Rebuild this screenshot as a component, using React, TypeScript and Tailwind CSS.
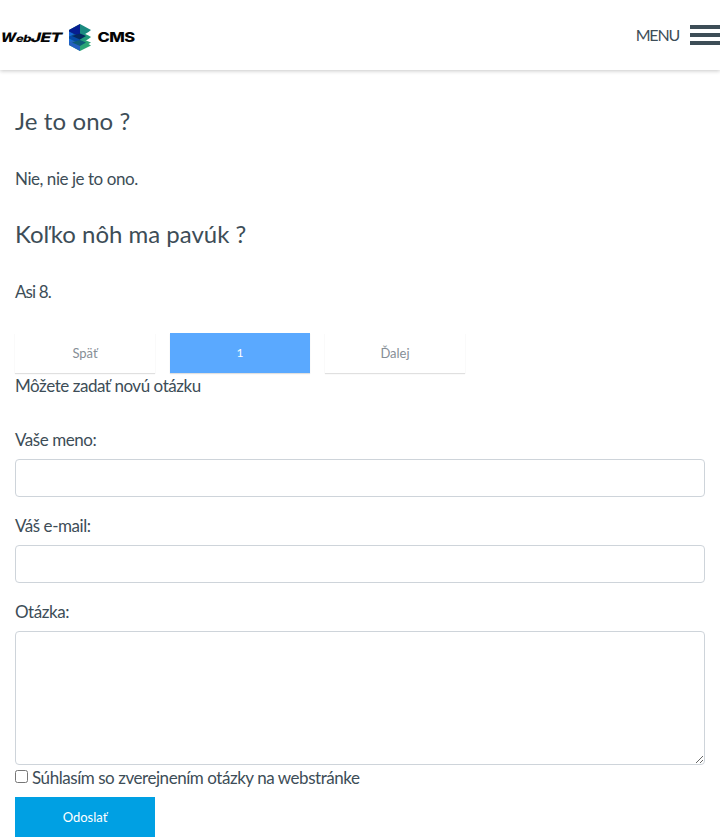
import React from "react";

function Logo() {
  return (
    <svg width="136" height="30" viewBox="0 0 136 30" className="block" fontFamily="Inter, 'Liberation Sans', sans-serif" fontWeight="800" fill="#050505">
      <g transform="skewX(-14)">
        <text x="4.500" y="19" fontSize="13" textLength="15" lengthAdjust="spacingAndGlyphs">W</text>
        <text x="20" y="19" fontSize="10" textLength="15" lengthAdjust="spacingAndGlyphs">eb</text>
        <text x="34.500" y="19" fontSize="13" textLength="31" lengthAdjust="spacingAndGlyphs">JET</text>
      </g>
      <g transform="translate(0 1)">
        <path d="M69 7 80 1v24l-11-5z" fill="#1765dd" />
        <path d="M80 14 91 18.500 88.500 20 91 21.500 80 27 69 21v-3z" fill="#2ba575" />
        <path d="M80 14v13l-11-6v-3z" fill="#2460c0" />
        <path d="M80 7.500 88.500 11.500 91 13 88.500 15 80 20 69 14.500v-2z" fill="#239b7b" />
        <path d="M80 7.500V20l-11-5.500v-2z" fill="#064aa5" />
        <path d="M80 0 91 6 88.500 8 80 13 69 7.500V6z" fill="#1b8a80" />
        <path d="M80 0v13l-11-5.500V6z" fill="#061e91" />
        <path d="m80 9.500 6 2.500-6 3.500-8-3.500z" fill="#06295f" />
        <path d="m80 16 6 2.500-6 3.500-8-3.500z" fill="#0d5c78" />
      </g>
      <text x="97.500" y="19" fontSize="13" textLength="37" lengthAdjust="spacingAndGlyphs">CMS</text>
    </svg>
  );
}

function Field({ label, area = false }: { label: string; area?: boolean }) {
  return (
    <label className="block">
      <span className="mb-2 block h-6">{label}</span>
      {area ? (
        <textarea className="block h-[134px] w-full resize rounded-[4px] border border-[#ced4da] bg-white outline-none" />
      ) : (
        <input className="mb-4 block h-[38px] w-full rounded-[4px] border border-[#ced4da] bg-white outline-none" />
      )}
    </label>
  );
}

export default function App() {
  return (
    <div className="h-[837px] w-full overflow-hidden bg-white font-['Lato','Noto_Sans',sans-serif] text-[17px] leading-[26px] tracking-[-0.45px] text-[#3d4d57]">
      <header className="flex h-[70px] items-center justify-between shadow-[0_1px_4px_rgba(0,0,0,0.22)]">
        <div className="pt-[6px]"><Logo /></div>
        <button className="flex items-center gap-[11px]">
          <span className="text-[16px] leading-6 tracking-[-1.2px]">MENU</span>
          <span className="flex flex-col gap-1">
            <span className="h-1 w-[30px] bg-[#3d4d57]" />
            <span className="h-1 w-[30px] bg-[#3d4d57]" />
            <span className="h-1 w-[30px] bg-[#3d4d57]" />
          </span>
        </button>
      </header>
      <main className="px-[15px] pt-[33px]">
        <h2 className="h-9 text-[24px] leading-9 tracking-[0.1px]">Je to ono ?</h2>
        <p className="mt-[27px] h-6">Nie, nie je to ono.</p>
        <h2 className="mt-[26px] h-9 text-[24px] leading-9 tracking-normal">Koľko nôh ma pavúk ?</h2>
        <p className="mt-[27px] h-6 tracking-[-0.9px]">Asi 8.</p>
        <nav className="mt-[30px] flex gap-[15px] text-[13px] leading-6 tracking-normal text-[#868e96]">
          <button className="h-10 w-[140px] bg-white shadow-[0_1px_1px_rgba(0,0,0,0.12)]">Späť</button>
          <button className="h-10 w-[140px] bg-[#5aa9ff] text-[12px] text-white shadow-[0_1px_1px_rgba(0,0,0,0.12)]">1</button>
          <button className="h-10 w-[140px] bg-white shadow-[0_1px_1px_rgba(0,0,0,0.12)]">Ďalej</button>
        </nav>
        <p className="h-6">Môžete zadať novú otázku</p>
        <form className="mt-[30px]">
          <Field label="Vaše meno:" />
          <Field label="Váš e-mail:" />
          <Field label="Otázka:" area />
          <label className="flex h-6 items-start gap-1">
            <input type="checkbox" className="m-0 mt-[5px] h-[13px] w-[13px]" />
            <span>Súhlasím so zverejnením otázky na webstránke</span>
          </label>
          <button type="button" className="mt-2 block h-10 w-[140px] bg-[#00a0e3] text-[13px] leading-6 tracking-normal text-white">Odoslať</button>
        </form>
      </main>
    </div>
  );
}
